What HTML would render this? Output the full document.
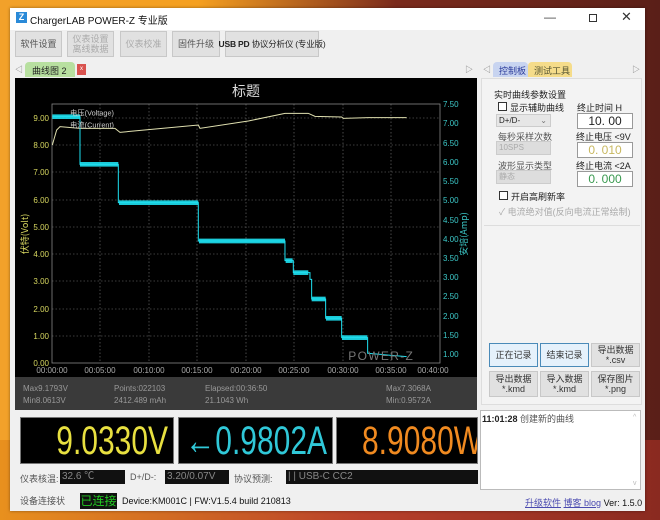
<!DOCTYPE html><html><head><meta charset="utf-8"><style>
*{margin:0;padding:0;box-sizing:border-box}
body{width:660px;height:520px;overflow:hidden;position:relative;font-family:"Liberation Sans","Noto Sans CJK SC",sans-serif;font-size:9px;color:#222;background:linear-gradient(90deg,#f2a12a 0%,#f5a020 30%,#7a2a1c 60%,#5a1f18 100%)}
.a{position:absolute}
.win{left:10px;top:8px;width:635px;height:503px;background:#f0f0f0;box-shadow:0 0 3px rgba(0,0,0,.4)}
.btn{position:absolute;background:#e1e1e1;border:1px solid #c8c8c8;color:#555;font-size:9px;display:flex;align-items:center;justify-content:center;text-align:center;line-height:10px}
.dis{color:#aaa}
.tx{position:absolute;white-space:nowrap}
.inp{position:absolute;background:#fff;border:1px solid #999;font-size:12px;text-align:center;line-height:14px}
.chk{position:absolute;width:9px;height:9px;border:1px solid #333;background:#fff}
.big{position:absolute;top:417px;height:47px;background:#000;border:1px solid #777;overflow:hidden;white-space:nowrap}
.big span{position:absolute;top:2px;font-size:40px;line-height:42px;transform:scaleX(.75)}
.sb{position:absolute;top:470px;height:14px;background:#111;color:#888;font-size:10px;line-height:14px;padding-left:2px}
</style></head><body>
<div class="a" style="left:0;top:440px;width:660px;height:80px;background:linear-gradient(90deg,#e8901e,#b8402a 55%,#8a2a20)"></div>
<div class="a win"></div>
<div class="a" style="left:10px;top:8px;width:635px;height:22px;background:#fff"></div>
<div class="a" style="left:16px;top:12px;width:11px;height:11px;background:#2a8ad8;color:#fff;font-size:9px;font-weight:bold;line-height:11px;text-align:center">Z</div>
<div class="tx" style="left:30px;top:12px;font-size:10px;color:#111">ChargerLAB POWER-Z 专业版</div>
<div class="tx" style="left:544px;top:10px;font-size:12px;color:#444">—</div>
<div class="a" style="left:589px;top:14px;width:8px;height:8px;border:1px solid #333"></div>
<div class="tx" style="left:621px;top:9px;font-size:13px;color:#333">✕</div>
<div class="btn" style="left:15px;top:31px;width:47px;height:26px">软件设置</div>
<div class="btn dis" style="left:67px;top:31px;width:47px;height:26px">仪表设置<br>离线数据</div>
<div class="btn dis" style="left:120px;top:31px;width:47px;height:26px">仪表校准</div>
<div class="btn" style="left:172px;top:31px;width:48px;height:26px">固件升级</div>
<div class="btn" style="left:225px;top:31px;width:94px;height:26px;color:#222;white-space:nowrap;font-size:8.5px;letter-spacing:-0.2px"><b style="font-weight:600">USB PD</b>&nbsp;协议分析仪 (专业版)</div>
<div class="tx" style="left:15px;top:64px;color:#777;font-size:8px">◁</div>
<div class="a" style="left:25px;top:62px;width:50px;height:15px;background:#b8e0a0;border-radius:4px 4px 0 0"></div>
<div class="tx" style="left:32px;top:64px;font-size:9px">曲线图 2</div>
<div class="a" style="left:77px;top:64px;width:9px;height:11px;background:#d9534f;color:#fff;font-size:6px;text-align:center;line-height:11px">x</div>
<div class="tx" style="left:465px;top:64px;color:#777;font-size:8px">▷</div>
<div class="tx" style="left:483px;top:64px;color:#777;font-size:8px">◁</div>
<div class="a" style="left:493px;top:62px;width:35px;height:15px;background:#c8d4f0;border-radius:4px 4px 0 0"></div>
<div class="tx" style="left:499px;top:64px;color:#2a3a9a">控制板</div>
<div class="a" style="left:528px;top:62px;width:44px;height:15px;background:#f5dc8a;border-radius:4px 4px 0 0"></div>
<div class="tx" style="left:534px;top:64px;color:#553">测试工具</div>
<div class="tx" style="left:632px;top:64px;color:#777;font-size:8px">▷</div>
<svg class="a" style="left:15px;top:78px" width="462" height="332" viewBox="15 78 462 332">
<rect x="15" y="78" width="462" height="300" fill="#000"/>
<rect x="15" y="377" width="462" height="33" fill="#3a3a3a"/>
<text x="246" y="96" fill="#ddd" font-size="14" text-anchor="middle" font-family="Noto Sans CJK SC,sans-serif">标题</text>
<g stroke="#777" stroke-width="0.6" stroke-dasharray="1.5,2">
<line x1="52" y1="118" x2="440" y2="118"/><line x1="52" y1="145" x2="440" y2="145"/><line x1="52" y1="172" x2="440" y2="172"/><line x1="52" y1="200" x2="440" y2="200"/><line x1="52" y1="227" x2="440" y2="227"/><line x1="52" y1="254" x2="440" y2="254"/><line x1="52" y1="281" x2="440" y2="281"/><line x1="52" y1="309" x2="440" y2="309"/><line x1="52" y1="336" x2="440" y2="336"/>
<line x1="100" y1="104" x2="100" y2="363"/><line x1="149" y1="104" x2="149" y2="363"/><line x1="197" y1="104" x2="197" y2="363"/><line x1="246" y1="104" x2="246" y2="363"/><line x1="294" y1="104" x2="294" y2="363"/><line x1="343" y1="104" x2="343" y2="363"/><line x1="391" y1="104" x2="391" y2="363"/>
</g>
<rect x="52" y="104" width="388" height="259" fill="none" stroke="#888" stroke-width="0.8"/>
<g font-size="8" fill="#d8d860" text-anchor="end" font-family="Liberation Sans">
<text x="49" y="121">9.00</text><text x="49" y="148">8.00</text><text x="49" y="175">7.00</text><text x="49" y="203">6.00</text><text x="49" y="230">5.00</text><text x="49" y="257">4.00</text><text x="49" y="284">3.00</text><text x="49" y="312">2.00</text><text x="49" y="339">1.00</text><text x="49" y="366">0.00</text></g>
<g font-size="8" fill="#3cc8c8" font-family="Liberation Sans">
<text x="443" y="107">7.50</text><text x="443" y="126">7.00</text><text x="443" y="146">6.50</text><text x="443" y="165">6.00</text><text x="443" y="184">5.50</text><text x="443" y="203">5.00</text><text x="443" y="223">4.50</text><text x="443" y="242">4.00</text><text x="443" y="261">3.50</text><text x="443" y="280">3.00</text><text x="443" y="299">2.50</text><text x="443" y="319">2.00</text><text x="443" y="338">1.50</text><text x="443" y="357">1.00</text></g>
<g font-size="8" fill="#aaa" text-anchor="middle" font-family="Liberation Sans">
<text x="52" y="373">00:00:00</text><text x="100" y="373">00:05:00</text><text x="149" y="373">00:10:00</text><text x="197" y="373">00:15:00</text><text x="246" y="373">00:20:00</text><text x="294" y="373">00:25:00</text><text x="343" y="373">00:30:00</text><text x="391" y="373">00:35:00</text><text x="433" y="373">00:40:00</text></g>
<text transform="translate(28,234) rotate(-90)" fill="#d8d860" font-size="9" text-anchor="middle" font-family="Noto Sans CJK SC,sans-serif">伏特(Volt)</text>
<text transform="translate(467,234) rotate(-90)" fill="#3cc8c8" font-size="9" text-anchor="middle" font-family="Noto Sans CJK SC,sans-serif">安培(Amp)</text>
<g transform="translate(15,95) scale(0.3333)">
<polyline fill="none" stroke="#e0e0b0" stroke-width="3" points="112,150 125,105 135,95 195,100 300,100 315,112 550,90 555,100 700,78 810,55 880,55 900,64 980,66 985,70 1060,68 1175,68"/>
<polyline fill="none" stroke="#1ee0f0" stroke-width="3" points="112,65 195,65 195,208 310,208 310,323 550,323 550,438 810,438 810,497 835,497 835,533 885,533 885,553 890,553 890,612 932,612 932,670 980,670 980,728 1058,728 1058,775 1175,785"/>
<g stroke="#1ee0f0" stroke-width="14" opacity=".9">
<line x1="112" y1="65" x2="195" y2="65"/><line x1="195" y1="208" x2="310" y2="208"/><line x1="312" y1="323" x2="550" y2="323"/><line x1="552" y1="438" x2="810" y2="438"/><line x1="812" y1="497" x2="833" y2="497"/><line x1="835" y1="533" x2="880" y2="533"/><line x1="890" y1="612" x2="932" y2="612"/><line x1="933" y1="670" x2="980" y2="670"/><line x1="981" y1="728" x2="1057" y2="728"/></g>
<text x="165" y="62" fill="#ccc" font-size="22" font-family="Liberation Sans">电压(Voltage)</text>
<text x="165" y="98" fill="#ccc" font-size="22" font-family="Liberation Sans">电流(Current)</text>
<text x="1000" y="795" fill="#777" font-size="36" font-family="Liberation Sans" letter-spacing="4">POWER-Z</text>
</g>
<g font-size="8" fill="#999" font-family="Liberation Sans">
<text x="23" y="391">Max9.1793V</text><text x="23" y="403">Min8.0613V</text>
<text x="114" y="391">Points:022103</text><text x="114" y="403">2412.489 mAh</text>
<text x="205" y="391">Elapsed:00:36:50</text><text x="205" y="403">21.1043 Wh</text>
<text x="386" y="391">Max7.3068A</text><text x="386" y="403">Min:0.9572A</text></g>
</svg>
<div class="big" style="left:20px;width:154px;color:#e8e040"><span style="right:5px;transform-origin:right">9.0330V</span></div>
<div class="big" style="left:178px;width:155px;color:#30c8d8"><span style="right:5px;transform-origin:right">←0.9802A</span></div>
<div class="big" style="left:336px;width:142px;color:#f08a20"><span style="left:25px;transform-origin:left">8.9080W</span></div>
<div class="tx" style="left:20px;top:472px;color:#555">仪表核温:</div>
<div class="sb" style="left:60px;width:65px">32.6 ℃</div>
<div class="tx" style="left:130px;top:472px;color:#555">D+/D-:</div>
<div class="sb" style="left:165px;width:64px">3.20/0.07V</div>
<div class="tx" style="left:234px;top:472px;color:#555">协议预测:</div>
<div class="sb" style="left:286px;width:192px">| | USB-C CC2</div>
<div class="tx" style="left:20px;top:494px;color:#555">设备连接状</div>
<div class="a" style="left:80px;top:493px;width:37px;height:16px;background:#111;color:#2c2;font-size:12px;line-height:16px;text-align:center">已连接</div>
<div class="tx" style="left:122px;top:496px;font-size:9px;color:#111">Device:KM001C | FW:V1.5.4 build 210813</div>
<div class="tx" style="left:525px;top:496px;font-size:9px;color:#111"><span style="color:#4a4ab0;text-decoration:underline">升级软件</span> <span style="color:#4a4ab0;text-decoration:underline">博客 blog</span> Ver: 1.5.0</div>
<div class="a" style="left:481px;top:78px;width:161px;height:327px;border:1px solid #ddd;background:#f3f3f3"></div>
<div class="tx" style="left:494px;top:88px">实时曲线参数设置</div>
<div class="chk" style="left:498px;top:102px"></div>
<div class="tx" style="left:510px;top:101px">显示辅助曲线</div>
<div class="tx" style="left:577px;top:101px">终止时间 H</div>
<div class="a" style="left:496px;top:114px;width:55px;height:13px;background:#e6e6e6;border:1px solid #ccc;font-size:8px;line-height:11px;padding-left:2px">D+/D- <span style="float:right;padding-right:3px;color:#777">⌄</span></div>
<div class="inp" style="left:577px;top:113px;width:56px;height:16px">10. 00</div>
<div class="tx" style="left:498px;top:130px;color:#555">每秒采样次数</div>
<div class="tx" style="left:576px;top:130px">终止电压 &lt;9V</div>
<div class="a" style="left:496px;top:141px;width:55px;height:14px;background:#ddd;border:1px solid #ccc;color:#aaa;font-size:8px;line-height:12px;padding-left:2px">10SPS</div>
<div class="inp" style="left:577px;top:142px;width:56px;height:16px;color:#c8b860">0. 010</div>
<div class="tx" style="left:498px;top:159px;color:#555">波形显示类型</div>
<div class="tx" style="left:576px;top:159px">终止电流 &lt;2A</div>
<div class="a" style="left:496px;top:170px;width:55px;height:14px;background:#ddd;border:1px solid #ccc;color:#aaa;font-size:8px;line-height:12px;padding-left:2px">静态</div>
<div class="inp" style="left:577px;top:171px;width:56px;height:16px;color:#3a9a50">0. 000</div>
<div class="chk" style="left:499px;top:191px"></div>
<div class="tx" style="left:511px;top:190px">开启高刷新率</div>
<div class="tx" style="left:499px;top:205px;color:#aaa">✓ 电流绝对值(反向电流正常绘制)</div>
<div class="a" style="left:484px;top:225px;width:156px;height:0;border-top:1px solid #ddd"></div>
<div class="btn" style="left:489px;top:343px;width:49px;height:24px;border-color:#4a8ab8;background:#e5f1fb;color:#333">正在记录</div>
<div class="btn" style="left:540px;top:343px;width:49px;height:24px;border-color:#4a8ab8;background:#e5f1fb;color:#333">结束记录</div>
<div class="btn" style="left:591px;top:343px;width:49px;height:24px;color:#333">导出数据<br>*.csv</div>
<div class="btn" style="left:489px;top:371px;width:49px;height:26px;color:#333">导出数据<br>*.kmd</div>
<div class="btn" style="left:540px;top:371px;width:49px;height:26px;color:#333">导入数据<br>*.kmd</div>
<div class="btn" style="left:591px;top:371px;width:49px;height:26px;color:#333">保存图片<br>*.png</div>
<div class="a" style="left:480px;top:410px;width:161px;height:80px;background:#fff;border:1px solid #bbb"></div>
<div class="tx" style="left:482px;top:412px;font-size:9px"><b style="color:#222">11:01:28</b> <span style="color:#555">创建新的曲线</span></div>
<div class="tx" style="left:633px;top:414px;color:#bbb;font-size:7px">^</div>
<div class="tx" style="left:633px;top:480px;color:#bbb;font-size:7px">v</div>
</body></html>
